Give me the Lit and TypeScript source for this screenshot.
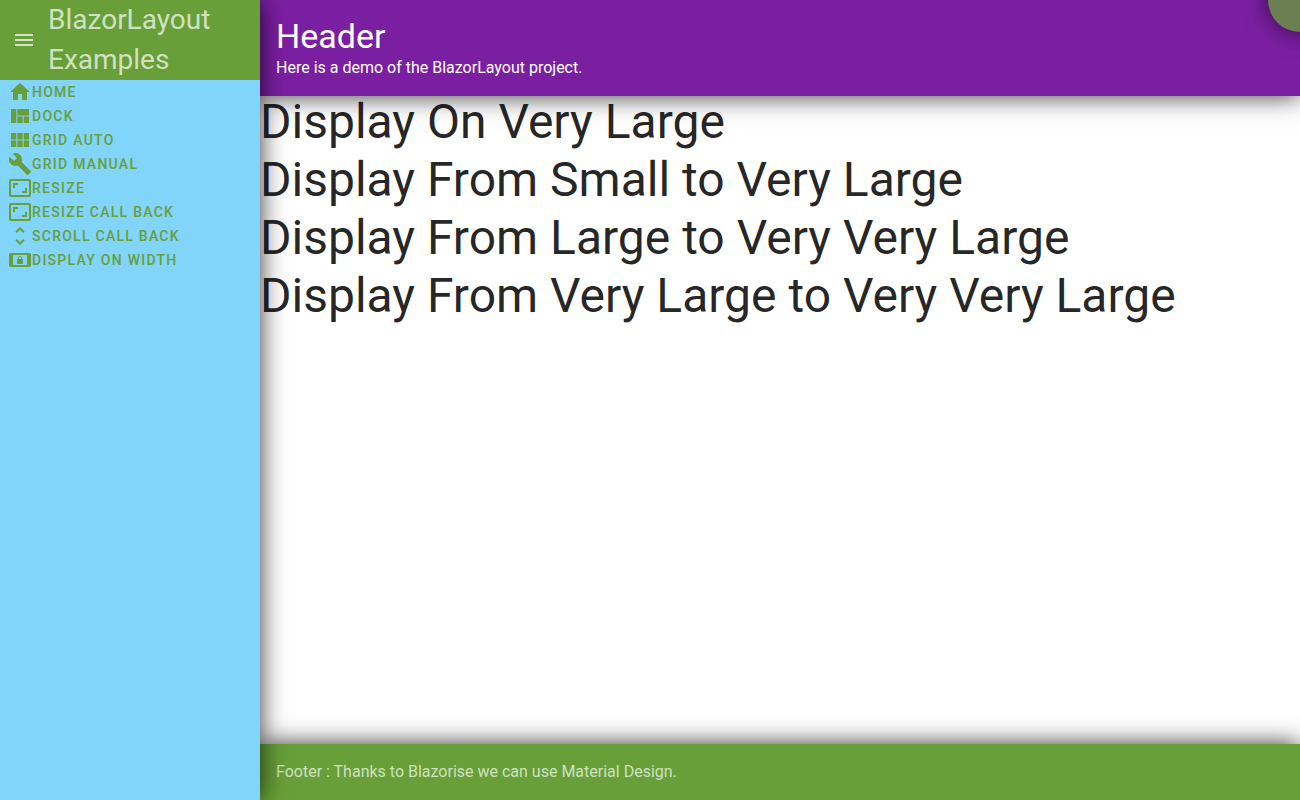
import { LitElement, html, css, svg } from "lit";
import { customElement } from "lit/decorators.js";

const icons = {
  menu: "M3 18h18v-2H3v2zm0-5h18v-2H3v2zm0-7v2h18V6H3z",
  home: "M10 20v-6h4v6h5v-8h3L12 3 2 12h3v8z",
  quilt: "M21 5v6.5H9.33V5H21zM14.67 19v-6.5H9.33V19h5.34zm1-6.5V19H21v-6.5h-5.33zM8.33 19V5H3v14h5.33z",
  modules: "M14.67 5v6.5H9.33V5h5.34zm1 6.5H21V5h-5.33v6.5zm-1 7.5v-6.5H9.33V19h5.34zm1-6.5V19H21v-6.5h-5.33zm-7.34 0H3V19h5.33v-6.5zm0-1V5H3v6.5h5.33z",
  build: "M22.7 19l-9.1-9.1c.9-2.3.4-5-1.5-6.9-2-2-5-2.4-7.4-1.3L9 6 6 9 1.6 4.7C.4 7.1.9 10.1 2.9 12.1c1.9 1.9 4.6 2.4 6.9 1.5l9.1 9.1c.4.4 1 .4 1.4 0l2.3-2.3c.5-.4.5-1.1.1-1.4z",
  aspect: "M19 12h-2v3h-3v2h5v-5zM7 9h3V7H5v5h2V9zm14-6H3c-1.1 0-2 .9-2 2v14c0 1.1.9 2 2 2h18c1.1 0 2-.9 2-2V5c0-1.1-.9-2-2-2zm0 16.01H3V4.99h18v14.02z",
  unfold: "M12 5.83L15.17 9l1.41-1.41L12 3 7.41 7.59 8.83 9 12 5.83zm0 12.34L8.83 15l-1.41 1.41L12 21l4.59-4.59L15.17 15 12 18.17z",
  lock: "M21 5H3c-1.1 0-2 .9-2 2v10c0 1.1.9 2 2 2h18c1.1 0 2-.9 2-2V7c0-1.1-.9-2-2-2zm-2 12H5V7h14v10zm-9-1h4c.55 0 1-.45 1-1v-3c0-.55-.45-1-1-1v-1c0-1.11-.9-2-2-2-1.11 0-2 .9-2 2v1c-.55 0-1 .45-1 1v3c0 .55.45 1 1 1zm.8-6c0-.66.54-1.2 1.2-1.2.67 0 1.2.54 1.2 1.2v1h-2.4v-1z",
};

const icon = (name: keyof typeof icons) => html`
  <svg class="icon" viewBox="0 0 24 24" aria-hidden="true">${svg`<path d=${icons[name]}></path>`}</svg>
`;

const links: { label: string; icon: keyof typeof icons }[] = [
  { label: "Home", icon: "home" },
  { label: "Dock", icon: "quilt" },
  { label: "Grid Auto", icon: "modules" },
  { label: "Grid Manual", icon: "build" },
  { label: "Resize", icon: "aspect" },
  { label: "Resize Call Back", icon: "aspect" },
  { label: "Scroll Call Back", icon: "unfold" },
  { label: "Display On Width", icon: "lock" },
];

const lines = [
  "Display On Very Large",
  "Display From Small to Very Large",
  "Display From Large to Very Very Large",
  "Display From Very Large to Very Very Large",
];

@customElement("app-root")
export class AppRoot extends LitElement {
  static styles = css`
    :host {
      display: grid;
      grid-template-columns: 260px minmax(0, 1fr);
      min-height: 100vh;
      position: relative;
      overflow: hidden;
      font-family: Roboto, "Liberation Sans", sans-serif;
      font-size: 16px;
      line-height: 24px;
      color: rgba(0, 0, 0, 0.87);
      --green: #689f38;
      --shadow: 0 0 24px rgba(0, 0, 0, 0.8);
    }
    h1, h2, p, ul {
      margin: 0;
      padding: 0;
      font-weight: 400;
    }
    .icon {
      display: block;
      flex: none;
      width: 24px;
      height: 24px;
      fill: currentColor;
    }
    .side {
      position: relative;
      z-index: 3;
      background: #81d4fa;
      box-shadow: var(--shadow);
    }
    .brand {
      display: flex;
      align-items: center;
      background: var(--green);
      color: rgba(255, 255, 255, 0.7);
    }
    .toggle {
      padding: 12px;
      border: 0;
      background: none;
      color: inherit;
      cursor: pointer;
    }
    .name {
      font-size: 28px;
      line-height: 40px;
    }
    .links {
      list-style: none;
    }
    .link {
      display: flex;
      align-items: center;
      padding: 0 8px;
      color: var(--green);
      font-size: 14px;
      font-weight: 500;
      letter-spacing: 0.09em;
      text-transform: uppercase;
      text-decoration: none;
    }
    .page {
      display: flex;
      flex-direction: column;
    }
    .header {
      position: relative;
      z-index: 2;
      padding: 16px;
      background: #7b1fa2;
      color: #fff;
      box-shadow: var(--shadow);
    }
    .title {
      font-size: 34px;
      line-height: 40px;
    }
    .content {
      flex: 1;
      display: flex;
      flex-direction: column;
      gap: 6px;
      font-size: 48px;
      line-height: 52px;
    }
    .footer {
      position: relative;
      z-index: 1;
      padding: 16px;
      background: var(--green);
      color: rgba(255, 255, 255, 0.7);
      box-shadow: var(--shadow);
    }
    .corner {
      position: absolute;
      z-index: 4;
      top: -32px;
      right: -32px;
      width: 64px;
      height: 64px;
      padding: 0;
      border: 0;
      border-radius: 50%;
      background: var(--green);
      opacity: 0.75;
      box-shadow: var(--shadow);
    }
  `;

  render() {
    return html`
      <aside class="side">
        <div class="brand">
          <button class="toggle" aria-label="Toggle menu">${icon("menu")}</button>
          <h2 class="name">BlazorLayout Examples</h2>
        </div>
        <nav>
          <ul class="links">
            ${links.map((l) => html`<li><a class="link" href="#">${icon(l.icon)}<span>${l.label}</span></a></li>`)}
          </ul>
        </nav>
      </aside>
      <div class="page">
        <header class="header">
          <h1 class="title">Header</h1>
          <p>Here is a demo of the BlazorLayout project.</p>
        </header>
        <main class="content">${lines.map((t) => html`<p>${t}</p>`)}</main>
        <footer class="footer">Footer : Thanks to Blazorise we can use Material Design.</footer>
      </div>
      <button class="corner" aria-label="Open panel"></button>
    `;
  }
}
